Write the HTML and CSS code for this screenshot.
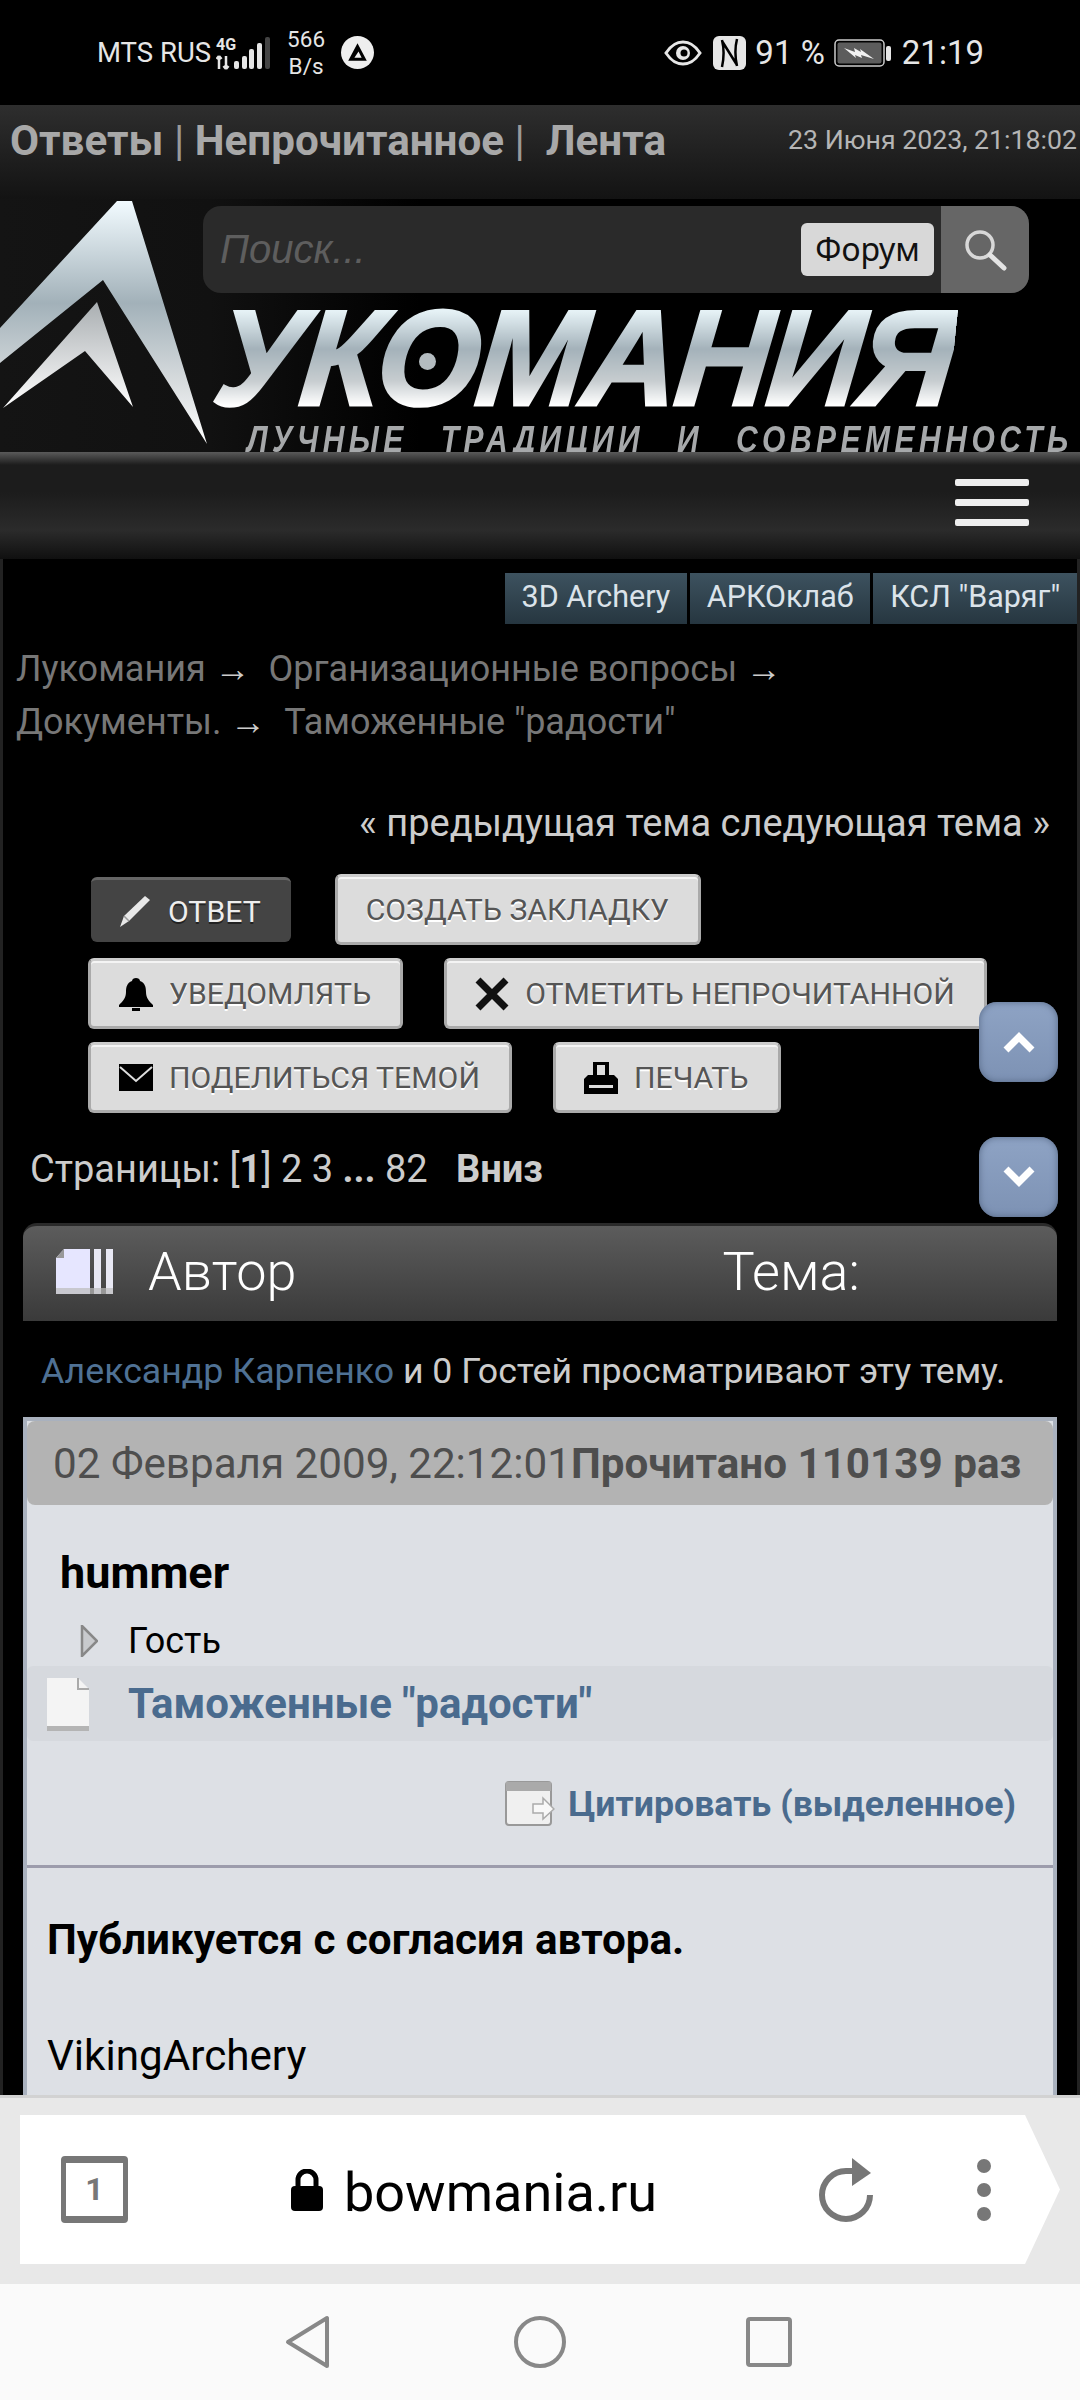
FILE: index.html
```html
<!DOCTYPE html>
<html lang="ru">
<head>
  <meta charset="UTF-8">
  <title>Таможенные "радости" - Лукомания</title>
  <link rel="stylesheet" href="styles.css">
</head>
<body>
<div class="page">

  <!-- status bar -->
  <div class="status">
    <div class="status-left">
      <span class="carrier">MTS RUS</span>
      <div class="signal">
        <span class="net">4G</span>
        <svg width="54" height="34" viewBox="0 0 54 34">
          <path d="M3 33V20M3 20l-2.500 3M3 20l2.500 3M10 20v13M10 33l-2.500-3M10 33l2.500-3" stroke="#e6e6e6" stroke-width="2.500" fill="none"/>
          <rect x="18" y="25" width="5" height="8" rx="2" fill="#e6e6e6"/>
          <rect x="26" y="20" width="5" height="13" rx="2" fill="#e6e6e6"/>
          <rect x="33" y="13" width="5" height="20" rx="2" fill="#e6e6e6"/>
          <rect x="41" y="7" width="5" height="26" rx="2" fill="#e6e6e6"/>
          <rect x="49" y="1" width="5" height="32" rx="2" fill="#444"/>
        </svg>
      </div>
      <div class="speed"><span>566</span><span>B/s</span></div>
      <svg class="app-badge" width="33" height="33" viewBox="0 0 32 32">
        <circle cx="16" cy="16" r="16" fill="#eee"/>
        <path d="M16 7l9 17H7zM17 15l-4 6h7z" fill="#000" fill-rule="evenodd"/>
      </svg>
    </div>
    <div class="status-right">
      <svg width="38" height="26" viewBox="0 0 38 26">
        <path d="M2 13C8 4 13 2 19 2s11 2 17 11c-6 9-11 11-17 11S8 22 2 13z" fill="none" stroke="#e6e6e6" stroke-width="3"/>
        <circle cx="19" cy="13" r="7" fill="#e6e6e6"/>
        <circle cx="20" cy="13" r="3.500" fill="#000"/>
      </svg>
      <svg class="nfc" width="33" height="34" viewBox="0 0 33 34">
        <rect width="33" height="34" rx="6" fill="#e6e6e6"/>
        <path d="M9 4c2 8 2 18 0 27M9 5l15 24M24 3c-2 8-2 18 0 27" fill="none" stroke="#000" stroke-width="2.500"/>
      </svg>
      <span class="pct">91 %</span>
      <svg class="batt" width="58" height="28" viewBox="0 0 58 28">
        <rect x="1" y="1" width="49" height="26" rx="4" fill="none" stroke="#ccc" stroke-width="1.500"/>
        <rect x="3.500" y="3.500" width="44" height="21" rx="2" fill="#5c5c5c"/>
        <path d="M10 9l11 4-1-4 7 4-1-3 14 10-13-4 1 3-7-3 1 3z" fill="#f2f2f2"/>
        <rect x="52" y="7" width="5" height="15" rx="2" fill="#e6e6e6"/>
      </svg>
      <span class="clock">21:19</span>
    </div>
  </div>

  <!-- top links -->
  <div class="topbar">
    <div class="toplinks"><b>Ответы</b> | <b>Непрочитанное</b> | &nbsp;<b>Лента</b></div>
    <div class="topdate">23 Июня 2023, 21:18:02</div>
  </div>

  <!-- logo banner with search -->
  <div class="banner">
    <svg class="logo-mark" width="220" height="253" viewBox="0 0 220 253">
      <defs>
        <linearGradient id="silver" x1="0" y1="0" x2="0" y2="1">
          <stop offset="0" stop-color="#f2fbff"/>
          <stop offset="0.42" stop-color="#a2b1b9"/>
          <stop offset="0.75" stop-color="#d8dcde"/>
          <stop offset="1" stop-color="#ffffff"/>
        </linearGradient>
        <linearGradient id="silver2" x1="0" y1="0" x2="0" y2="1">
          <stop offset="0" stop-color="#a9aeb1"/>
          <stop offset="1" stop-color="#ffffff"/>
        </linearGradient>
      </defs>
      <path d="M0 129L117 2h15l75 243-104-164L0 164z" fill="url(#silver)"/>
      <path d="M3 209L97 103l36 105-48-56z" fill="url(#silver2)"/>
    </svg>
    <div class="logo-name">УКОМАНИЯ</div>
    <span class="logo-dot"></span>
    <div class="logo-tag">ЛУЧНЫЕ ТРАДИЦИИ И СОВРЕМЕННОСТЬ</div>
    <div class="search">
      <span class="search-input">Поиск...</span>
      <span class="search-scope">Форум</span>
      <span class="search-btn">
        <svg width="44" height="42" viewBox="0 0 44 42">
          <circle cx="17" cy="16" r="13" fill="none" stroke="#d8d8d8" stroke-width="3.500"/>
          <path d="M27 26l14 13" stroke="#e4e4e4" stroke-width="5" stroke-linecap="round"/>
        </svg>
      </span>
    </div>
  </div>

  <!-- nav -->
  <div class="navbar">
    <div class="burger"><span></span><span></span><span></span></div>
  </div>

  <!-- forum content -->
  <div class="content">
    <div class="tabs">
      <a>3D Archery</a>
      <a>АРКОклаб</a>
      <a>КСЛ "Варяг"</a>
    </div>

    <div class="crumbs">
      Лукомания <i>→</i> &nbsp;Организационные вопросы <i>→</i><br>
      Документы. <i>→</i> &nbsp;Таможенные "радости"
    </div>

    <div class="topic-nav">« предыдущая тема следующая тема »</div>

    <div class="buttons">
      <div class="btn-row">
        <a class="btn btn-dark">
          <svg width="34" height="34" viewBox="0 0 34 34"><path d="M2 33l4-11L27 2l5 4-21 21z" fill="#e8e8e8"/><path d="M6 22l5 5" stroke="#999" stroke-width="1.500"/></svg>
          ОТВЕТ
        </a>
        <a class="btn">СОЗДАТЬ ЗАКЛАДКУ</a>
      </div>
      <div class="btn-row">
        <a class="btn">
          <svg width="34" height="34" viewBox="0 0 34 34"><path d="M13 4c0-4 8-4 8 0 5 2 6 6 6 11 0 6 3 9 7 13v2H0v-2c4-4 7-7 7-13 0-5 1-9 6-11zM13 31h8v3h-8z" fill="#000"/></svg>
          УВЕДОМЛЯТЬ
        </a>
        <a class="btn">
          <svg width="34" height="34" viewBox="0 0 34 34"><path d="M3 3l28 28M31 3L3 31" stroke="#111" stroke-width="7"/></svg>
          ОТМЕТИТЬ НЕПРОЧИТАННОЙ
        </a>
      </div>
      <div class="btn-row">
        <a class="btn">
          <svg width="34" height="28" viewBox="0 0 34 28"><rect width="34" height="27" fill="#000"/><path d="M1 3l16 14L33 3" fill="none" stroke="#ddd" stroke-width="2"/></svg>
          ПОДЕЛИТЬСЯ ТЕМОЙ
        </a>
        <a class="btn">
          <svg width="34" height="34" viewBox="0 0 34 34"><path d="M9 1h16v13h5l4 4v15H0V18l4-4h5z" fill="#000"/><path d="M13 4h8v10h-8z" fill="#ddd"/><path d="M5 24h24v3H5z" fill="#ddd"/></svg>
          ПЕЧАТЬ
        </a>
      </div>
    </div>

    <div class="pages">Страницы: [<b>1</b>] 2 3 <b>...</b> 82 &nbsp;&nbsp;<b class="down">Вниз</b></div>

    <div class="cat-bar">
      <svg width="60" height="47" viewBox="0 0 60 47">
        <path d="M9 1h26v45H1V10z" fill="#e6e6ff"/>
        <path d="M9 1v9H1z" fill="#999"/>
        <path d="M39 1h7v45h-7zM51 1h7v45h-7z" fill="#e8e8f4"/>
        <path d="M1 40h57v6H1z" fill="#bbb" opacity="0.7"/>
      </svg>
      <span class="cat-author">Автор</span>
      <span class="cat-topic">Тема:</span>
    </div>

    <div class="viewers"><a>Александр Карпенко</a> и 0 Гостей просматривают эту тему.</div>

    <div class="post">
      <div class="post-head">
        <span>02 Февраля 2009, 22:12:01</span><b>Прочитано 110139 раз</b>
      </div>
      <div class="poster">hummer</div>
      <div class="rank">
        <svg width="18" height="32" viewBox="0 0 18 32"><path d="M2 1l15 15L2 31z" fill="#c8cacd" stroke="#888" stroke-width="2.500"/></svg>
        Гость
      </div>
      <div class="subject">
        <svg width="44" height="54" viewBox="0 0 44 54">
          <path d="M1 1h31l11 11v41H1z" fill="#f4f4f4"/>
          <path d="M32 1v11h11" fill="none" stroke="#aaa" stroke-width="2"/>
          <path d="M1 49h42v5H1z" fill="#b4b4b4"/>
        </svg>
        <a>Таможенные "радости"</a>
      </div>
      <div class="quote-row">
        <svg width="50" height="46" viewBox="0 0 50 46">
          <rect x="1" y="1" width="45" height="43" rx="3" fill="#f0f0f0" stroke="#999" stroke-width="2"/>
          <rect x="1" y="1" width="45" height="9" fill="#aaa"/>
          <path d="M28 23h10v-6l11 11-11 10v-6H28z" fill="#f8f8f8" stroke="#aaa" stroke-width="1.500"/>
        </svg>
        <a>Цитировать (выделенное)</a>
      </div>
      <div class="post-body">
        <p><b>Публикуется с согласия автора.</b></p>
        <p class="gap">VikingArchery</p>
      </div>
    </div>
  </div>

  <!-- scroll buttons float above the page -->
  <a class="scroll-btn scroll-up">
    <svg width="34" height="22" viewBox="0 0 34 22"><path d="M4 19L17 6l13 13" fill="none" stroke="#fff" stroke-width="7"/></svg>
  </a>
  <a class="scroll-btn scroll-down">
    <svg width="34" height="22" viewBox="0 0 34 22"><path d="M4 3l13 13L30 3" fill="none" stroke="#fff" stroke-width="7"/></svg>
  </a>

  <!-- browser toolbar -->
  <div class="browser">
    <div class="urlbar">
      <span class="tab-count">1</span>
      <div class="url">
        <svg width="32" height="42" viewBox="0 0 32 42">
          <path d="M7 18v-7a9 9 0 0 1 18 0v7" fill="none" stroke="#000" stroke-width="5"/>
          <rect y="17" width="32" height="25" rx="4" fill="#000"/>
        </svg>
        <span class="host">bowmania.ru</span>
      </div>
      <svg class="reload" width="58" height="66" viewBox="0 0 58 66">
        <path d="M51 38a24 24 0 1 1-24-24h8" fill="none" stroke="#777" stroke-width="6"/>
        <path d="M33 1l19 15-19 13z" fill="#777"/>
      </svg>
      <div class="dots"><span></span><span></span><span></span></div>
    </div>
  </div>

  <!-- android nav -->
  <div class="sysnav">
    <svg width="46" height="54" viewBox="0 0 46 54"><path d="M42 3v48L3 27z" fill="none" stroke="#888" stroke-width="4" stroke-linejoin="round"/></svg>
    <svg width="54" height="54" viewBox="0 0 54 54"><circle cx="27" cy="27" r="24" fill="none" stroke="#888" stroke-width="4"/></svg>
    <svg class="sys-square" width="46" height="50" viewBox="0 0 46 50"><rect x="2" y="2" width="42" height="46" rx="2" fill="none" stroke="#888" stroke-width="4"/></svg>
  </div>

</div>
</body>
</html>
```

FILE: styles.css
```css
* {
  box-sizing: border-box;
}

body {
  margin: 0;
  background: #000;
  font-family: Roboto, sans-serif;
  color: #ccc;
}

a {
  text-decoration: none;
}

.page {
  position: relative;
  width: 1080px;
  height: 2400px;
  display: flex;
  flex-direction: column;
  overflow: hidden;
}

/* status bar */
.status {
  height: 105px;
  flex-shrink: 0;
  background: #000;
  color: #e6e6e6;
  display: flex;
  justify-content: space-between;
  align-items: center;
  padding: 0 97px;
}

.status-left,
.status-right {
  display: flex;
  align-items: center;
}

.carrier {
  font-size: 27.500px;
  white-space: nowrap;
}

.signal {
  position: relative;
  margin-left: 5px;
  width: 54px;
  height: 34px;
}

.signal svg {
  display: block;
}

.net {
  position: absolute;
  left: 0;
  top: 1px;
  font-size: 16px;
  line-height: 16px;
  font-weight: 700;
}

.speed {
  display: flex;
  flex-direction: column;
  align-items: center;
  font-size: 22.500px;
  line-height: 27px;
  margin-left: 17px;
  width: 38px;
}

.app-badge {
  margin-left: 16px;
}

.status-right {
  margin-right: -1px;
}

.status-right svg {
  display: block;
}

.nfc {
  margin-left: 11px;
}

.pct {
  font-size: 33px;
  margin-left: 9px;
}

.batt {
  margin-left: 9px;
}

.clock {
  font-size: 33px;
  margin-left: 10px;
}

/* top links */
.topbar {
  height: 94px;
  flex-shrink: 0;
  background: linear-gradient(#2e2e2e, #131313);
  display: flex;
  justify-content: space-between;
  align-items: center;
  padding: 0 3px 24px 10px;
}

.toplinks {
  font-size: 42.200px;
  color: #9a9a9a;
  white-space: nowrap;
}

.toplinks b {
  color: #a8a8a8;
}

.topdate {
  font-size: 26.700px;
  color: #b5b5b5;
  white-space: nowrap;
}

/* banner */
.banner {
  position: relative;
  height: 253px;
  flex-shrink: 0;
  background: linear-gradient(90deg, #141414 0, #111 210px, #000 420px);
}

.logo-mark {
  position: absolute;
  left: 0;
  top: 0;
}

.logo-name {
  position: absolute;
  left: 210px;
  top: 103px;
  font-family: "Liberation Sans", sans-serif;
  font-size: 136px;
  line-height: 112px;
  font-weight: 700;
  font-style: italic;
  letter-spacing: -3px;
  white-space: nowrap;
  -webkit-text-stroke: 3px transparent;
  background: linear-gradient(#e6f2f6 8%, #a4b2ba 42%, #c6cccf 70%, #fff 92%);
  -webkit-background-clip: text;
  background-clip: text;
  color: transparent;
  transform: scaleX(0.968) skewX(-6deg);
  transform-origin: left bottom;
}

.logo-dot {
  position: absolute;
  left: 419px;
  top: 154px;
  width: 17px;
  height: 17px;
  border-radius: 50%;
  background: #b4bcc0;
}

.logo-tag {
  position: absolute;
  left: 247px;
  top: 228px;
  font-family: "Liberation Sans", sans-serif;
  font-size: 30px;
  line-height: 20px;
  font-weight: 700;
  font-style: italic;
  letter-spacing: 4.500px;
  word-spacing: 20px;
  white-space: nowrap;
  color: #a6a8aa;
  transform: scaleY(1.25);
  transform-origin: left top;
}

.search {
  position: absolute;
  left: 203px;
  top: 7px;
  width: 826px;
  height: 87px;
  border-radius: 18px;
  background: #2a2a2a;
  overflow: hidden;
  display: flex;
  align-items: center;
}

.search-input {
  flex: 1;
  padding-left: 17px;
  font-family: "Liberation Sans", sans-serif;
  font-size: 40px;
  font-style: italic;
  color: #5e5e5e;
}

.search-scope {
  width: 133px;
  height: 53px;
  margin-right: 7px;
  border-radius: 6px;
  background: #d8d8d8;
  color: #111;
  font-family: "Noto Sans", sans-serif;
  font-size: 32px;
  line-height: 52px;
  text-align: center;
}

.search-btn {
  width: 88px;
  height: 100%;
  background: #666;
  display: flex;
  align-items: center;
  justify-content: center;
}

/* nav bar */
.navbar {
  position: relative;
  height: 107px;
  flex-shrink: 0;
  background: linear-gradient(#5a5a5a 0, #1c1c1c 13px, #1c1c1c 40px, #2b2b2b 78px, #101010 100%);
  display: flex;
  justify-content: flex-end;
  padding: 27px 51px 0 0;
}

.burger {
  width: 74px;
}

.burger span {
  display: block;
  height: 7px;
  margin-bottom: 13px;
  border-radius: 2px;
  background: #eee;
}

/* content */
.content {
  flex: 1;
  min-height: 0;
  overflow: hidden;
  background: #000;
  border-left: 3px solid #222;
  border-right: 3px solid #222;
}

.tabs {
  display: flex;
  justify-content: flex-end;
  gap: 3px;
  margin-top: 14px;
}

.tabs a {
  height: 51px;
  padding: 0 16.800px;
  background: linear-gradient(#3d525f, #263640);
  color: #dbe3ea;
  font-size: 30.500px;
  line-height: 48px;
}

.crumbs {
  margin-top: 19px;
  padding-left: 13px;
  font-size: 36px;
  line-height: 53px;
  color: #777;
}

.crumbs i {
  font-style: normal;
  font-size: 36px;
  color: #ccc;
}

.topic-nav {
  margin-top: 49px;
  padding-right: 27px;
  text-align: right;
  font-size: 38px;
  line-height: 50px;
  color: #ccc;
}

/* buttons */
.buttons {
  margin-top: 26px;
  margin-left: 85px;
  display: flex;
  flex-direction: column;
  gap: 13px;
}

.btn-row {
  display: flex;
  align-items: center;
  gap: 41px;
}

.btn {
  height: 71px;
  padding: 0 29px 0 28px;
  display: flex;
  align-items: center;
  gap: 16px;
  border: 3px solid #aaa;
  border-top-color: #ccc;
  border-radius: 6px;
  background: #dcdcdc;
  box-shadow: inset 0 2px 0 #f4f4f4;
  color: #555;
  font-size: 30.200px;
  text-shadow: 0 2px 0 #fff;
  white-space: nowrap;
}

.btn-dark {
  height: 65px;
  margin: 0 3px 0 3px;
  padding: 0 30px 0 27px;
  border: 0;
  border-top: 3px solid #666;
  background: #444;
  box-shadow: none;
  color: #eee;
  text-shadow: 0 2px 0 #222;
}

.pages {
  margin-top: 31px;
  padding-left: 27px;
  font-size: 38px;
  line-height: 50px;
  color: #ccc;
}

/* category bar */
.cat-bar {
  position: relative;
  height: 98px;
  margin: 29px 20px 0;
  padding: 0 0 4px 32px;
  display: flex;
  align-items: center;
  border-top: 3px solid #2a2a2a;
  border-radius: 14px 14px 0 0;
  background: linear-gradient(#5c5c5c, #3a3a3a);
  color: #fff;
  font-size: 54px;
  font-weight: 300;
}

.cat-author {
  margin-left: 33px;
}

.cat-topic {
  margin-left: 426px;
}

.viewers {
  margin-top: 25px;
  padding-left: 38px;
  font-size: 35.700px;
  line-height: 50px;
  white-space: nowrap;
}

.viewers a {
  color: #4f7194;
}

/* post */
.post {
  margin: 21px 20px 0;
  padding-bottom: 60px;
  border: 4px solid #a9b1be;
  background: #dde0e5;
  color: #000;
}

.post-head {
  height: 84px;
  padding-left: 26px;
  display: flex;
  align-items: center;
  border-radius: 8px;
  background: #b3b3b3;
  color: #4e4e4e;
  font-size: 42.200px;
  white-space: nowrap;
}

.poster {
  margin-top: 43px;
  padding-left: 33px;
  font-size: 45px;
  line-height: 50px;
  font-weight: 700;
}

.rank {
  margin-top: 21px;
  padding-left: 53px;
  height: 44px;
  display: flex;
  align-items: center;
  gap: 30px;
  font-size: 36px;
}

.subject {
  height: 75px;
  margin-top: 3px;
  padding-left: 19px;
  display: flex;
  align-items: center;
  gap: 38px;
  border-radius: 6px;
  background: #d6d9de;
}

.subject a,
.quote-row a {
  color: #4a6b8e;
  font-weight: 700;
}

.subject a {
  font-size: 42px;
}

.quote-row {
  margin-top: 38px;
  height: 50px;
  padding-right: 37px;
  display: flex;
  justify-content: flex-end;
  align-items: center;
  gap: 13px;
}

.quote-row a {
  font-size: 35.700px;
}

.post-body {
  margin-top: 36px;
  padding: 47px 20px 0;
  border-top: 3px solid #9c9cac;
  font-size: 42.200px;
  line-height: 50px;
}

.post-body p {
  margin: 0;
}

.post-body .gap {
  margin-top: 66px;
}

/* scroll buttons */
.scroll-btn {
  position: absolute;
  left: 979px;
  width: 79px;
  height: 80px;
  display: flex;
  align-items: center;
  justify-content: center;
  border-radius: 18px;
  background: linear-gradient(#8ea3c4, #7d92b4);
  box-shadow: inset 0 0 7px #566885;
}

.scroll-up {
  top: 1002px;
}

.scroll-down {
  top: 1137px;
}

/* browser toolbar */
.browser {
  height: 189px;
  flex-shrink: 0;
  padding-top: 17px;
  border-top: 3px solid #d2d2d2;
  background: #e8e8e8;
}

.urlbar {
  position: relative;
  width: 1040px;
  height: 149px;
  margin-left: 20px;
  padding-left: 41px;
  display: flex;
  align-items: center;
  background: #fff;
  clip-path: polygon(0 0, 1005px 0, 100% 50%, 1005px 100%, 0 100%);
}

.tab-count {
  width: 67px;
  height: 67px;
  border: solid #777;
  border-width: 7px 5px;
  border-radius: 4px;
  color: #777;
  font-size: 32px;
  font-weight: 700;
  line-height: 53px;
  text-align: center;
}

.url {
  display: flex;
  align-items: center;
  gap: 21px;
  margin-left: 163px;
  color: #000;
  font-size: 54px;
}

.host {
  position: relative;
  top: 3px;
}

.reload {
  margin-left: 162px;
}

.dots {
  margin-left: 100px;
  display: flex;
  flex-direction: column;
  gap: 10px;
}

.dots span {
  width: 14px;
  height: 14px;
  border-radius: 50%;
  background: #777;
}

/* android nav */
.sysnav {
  height: 116px;
  flex-shrink: 0;
  background: #fafafa;
  display: flex;
  justify-content: center;
  align-items: center;
  gap: 182px;
}

.sys-square {
  margin-left: -3px;
  margin-right: 3px;
}
```
